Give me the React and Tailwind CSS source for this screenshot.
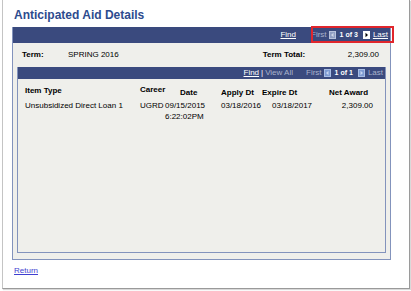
import React from "react";

function NavIcon({ dir, bg, fg, border }) {
  return (
    <svg width="7" height="8" viewBox="0 0 7 8" className="block shrink-0">
      <rect x="0.5" y="0.5" width="6" height="7" fill={bg} stroke={border} strokeWidth="1" />
      {dir === "left" ? (
        <polygon points="4.5,1.8 4.5,6.2 2,4" fill={fg} />
      ) : (
        <polygon points="2.5,1.8 2.5,6.2 5,4" fill={fg} />
      )}
    </svg>
  );
}

export default function App() {
  return (
    <div
      className="w-[411px] h-[291px] bg-white pl-[2px] pr-[1px] text-[8px] leading-[10px] text-black"
      style={{ fontFamily: '"Liberation Sans", Arial, sans-serif' }}
    >
      <div className="h-[289px] border-l border-r border-b border-l-[#c4c4c4] border-r-[#9a9a9a] border-b-[#9a9a9a] shadow-[1px_1px_1px_rgba(0,0,0,0.15)] pl-[9px] flex flex-col">
        <div className="pl-[2px] pt-[8px] h-[22px] text-[12px] leading-[14px] font-bold text-[#2d4b8e]">
          Anticipated Aid Details
        </div>

        <div className="relative mt-[5px] w-[379px] border-x border-b border-[#8393bc] bg-[#efefeb] pb-[6px]">
          <div className="h-[16px] bg-[#3a4a7e] flex items-center justify-end pr-[2px] text-white">
            <span className="underline">Find</span>
            <span className="ml-[15px] text-[#aab3cc]">First</span>
            <span className="ml-[2px]"><NavIcon dir="left" bg="#8e9cc2" fg="#cdd4e6" border="#b7c1db" /></span>
            <span className="ml-[4px] font-bold text-[7px]">1 of 3</span>
            <span className="ml-[5px]"><NavIcon dir="right" bg="#ffffff" fg="#000000" border="#ffffff" /></span>
            <span className="ml-[3px] underline">Last</span>
          </div>
          <div className="absolute left-[298px] top-[-1px] w-[83px] h-[17px] border-2 border-[#e0262c]" />

          <div className="h-[24px] flex items-center">
            <span className="ml-[9px] w-[46px] font-bold">Term:</span>
            <span>SPRING 2016</span>
            <span className="ml-[144px] font-bold">Term Total:</span>
            <span className="ml-auto mr-[11px]">2,309.00</span>
          </div>

          <div className="ml-[4px] w-[369px] h-[186px] border-x border-b border-[#8393bc] bg-[#efefeb]">
            <div className="h-[12px] bg-[#3a4a7e] flex items-center justify-end pr-[2px] text-white">
              <span className="underline">Find</span>
              <span className="ml-[2px]">|</span>
              <span className="ml-[2px] text-[#aab3cc]">View All</span>
              <span className="ml-[13px] text-[#aab3cc]">First</span>
              <span className="ml-[2px]"><NavIcon dir="left" bg="#7d9bd2" fg="#c9d6ef" border="#a9bde3" /></span>
              <span className="ml-[4px] font-bold text-[7px]">1 of 1</span>
              <span className="ml-[5px]"><NavIcon dir="right" bg="#7d9bd2" fg="#c9d6ef" border="#a9bde3" /></span>
              <span className="ml-[3px] text-[#aab3cc]">Last</span>
            </div>

            <div className="mt-[6px] h-[15px] flex items-start font-bold">
              <div className="w-[122px] pl-[7px] pt-[1px]">Item Type</div>
              <div className="w-[40px]">Career</div>
              <div className="w-[41px] pt-[3px]">Date</div>
              <div className="w-[41px] pt-[3px]">Apply Dt</div>
              <div className="w-[67px] pt-[3px]">Expire Dt</div>
              <div className="pt-[3px]">Net Award</div>
            </div>

            <div className="flex items-start leading-[11px]">
              <div className="w-[122px] pl-[7px]">Unsubsidized Direct Loan 1</div>
              <div className="w-[25px]">UGRD</div>
              <div className="w-[56px] flex flex-col">
                <span>09/15/2015</span>
                <span>6:22:02PM</span>
              </div>
              <div className="w-[51px]">03/18/2016</div>
              <div className="w-[60px]">03/18/2017</div>
              <div className="w-[41px] text-right">2,309.00</div>
            </div>
          </div>
        </div>

        <div className="mt-[6px] pl-[2px]">
          <span className="underline text-[#3f3fd0]">Return</span>
        </div>
      </div>
    </div>
  );
}
